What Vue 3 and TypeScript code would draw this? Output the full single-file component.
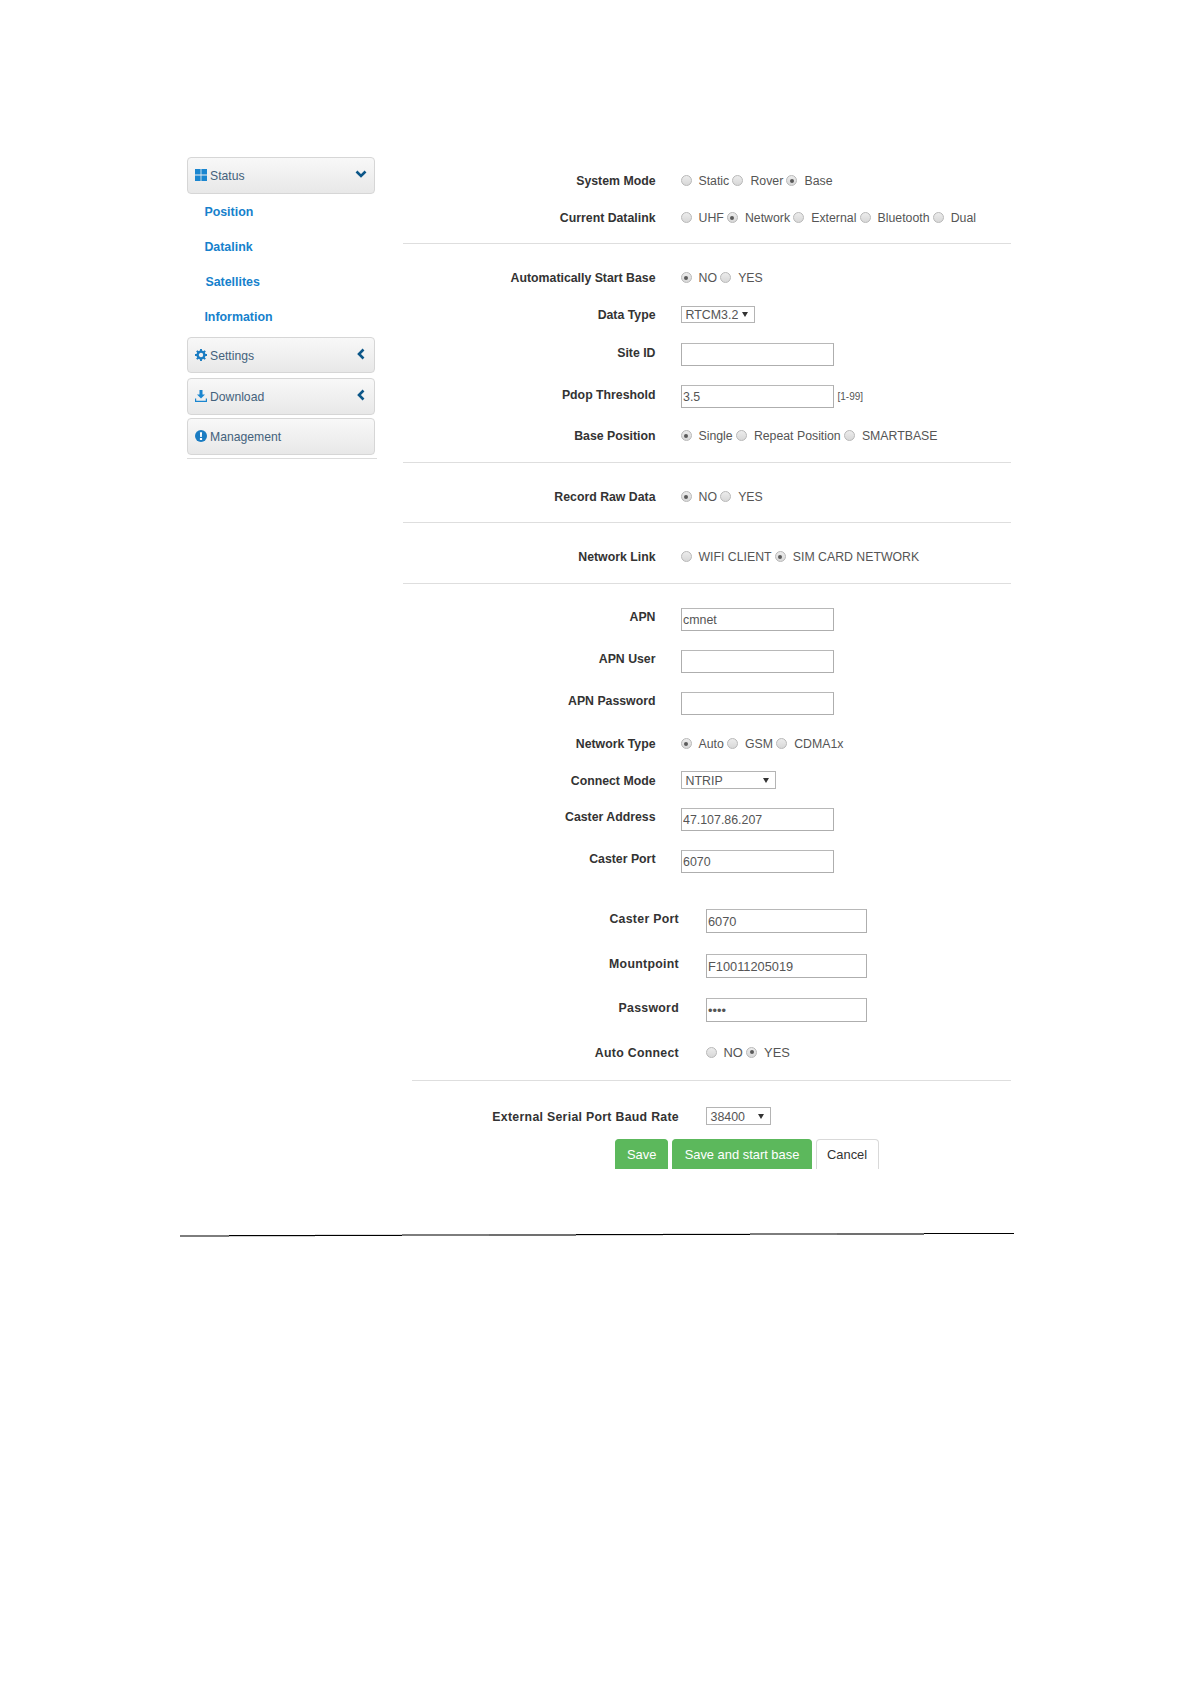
<script setup lang="ts">
type Opt = { text: string; on?: boolean }
type Row =
  | { kind: 'hr'; gap: number; low?: boolean }
  | { kind: 'radio'; gap: number; label: string; opts: Opt[]; low?: boolean }
  | { kind: 'input'; gap: number; label: string; value?: string; hint?: string; low?: boolean; type?: string }
  | { kind: 'select'; gap: number; label: string; value: string; width: number; height: number; low?: boolean }

const radios = (on: number, ...names: string[]): Opt[] => names.map((text, i) => ({ text, on: i === on }))

const rows: Row[] = [
  { kind: 'radio', gap: 0, label: 'System Mode', opts: radios(2, 'Static', 'Rover', 'Base') },
  { kind: 'radio', gap: 15, label: 'Current Datalink', opts: radios(1, 'UHF', 'Network', 'External', 'Bluetooth', 'Dual') },
  { kind: 'hr', gap: 14.6 },
  { kind: 'radio', gap: 22.4, label: 'Automatically Start Base', opts: radios(0, 'NO', 'YES') },
  { kind: 'select', gap: 17.6, label: 'Data Type', value: 'RTCM3.2', width: 74, height: 16.4 },
  { kind: 'input', gap: 21.2, label: 'Site ID' },
  { kind: 'input', gap: 19.3, label: 'Pdop Threshold', value: '3.5', hint: '[1-99]' },
  { kind: 'radio', gap: 16.7, label: 'Base Position', opts: radios(0, 'Single', 'Repeat Position', 'SMARTBASE') },
  { kind: 'hr', gap: 15.3 },
  { kind: 'radio', gap: 22.6, label: 'Record Raw Data', opts: radios(0, 'NO', 'YES') },
  { kind: 'hr', gap: 14.7 },
  { kind: 'radio', gap: 22.7, label: 'Network Link', opts: radios(1, 'WIFI CLIENT', 'SIM CARD NETWORK') },
  { kind: 'hr', gap: 15.3 },
  { kind: 'input', gap: 24.3, label: 'APN', value: 'cmnet' },
  { kind: 'input', gap: 19.6, label: 'APN User' },
  { kind: 'input', gap: 19.6, label: 'APN Password' },
  { kind: 'radio', gap: 18, label: 'Network Type', opts: radios(0, 'Auto', 'GSM', 'CDMA1x') },
  { kind: 'select', gap: 16.6, label: 'Connect Mode', value: 'NTRIP', width: 95, height: 17.4 },
  { kind: 'input', gap: 19.6, label: 'Caster Address', value: '47.107.86.207' },
  { kind: 'input', gap: 19.6, label: 'Caster Port', value: '6070' },
  { kind: 'input', gap: 36.6, label: 'Caster Port', value: '6070', low: true },
  { kind: 'input', gap: 21.3, label: 'Mountpoint', value: 'F10011205019', low: true },
  { kind: 'input', gap: 20.3, label: 'Password', value: 'abcd', low: true, type: 'password' },
  { kind: 'radio', gap: 19.3, label: 'Auto Connect', opts: radios(1, 'NO', 'YES'), low: true },
  { kind: 'hr', gap: 17, low: true },
  { kind: 'select', gap: 26, label: 'External Serial Port Baud Rate', value: '38400', width: 65, height: 17.4, low: true },
]

const subItems = ['Position', 'Datalink', 'Satellites', 'Information']

const ruleSegments = [
  { x: 0, w: 49, y: 2, h: 2, fill: '#7d7d7d' },
  { x: 49, w: 86, y: 2, h: 1, fill: '#000' },
  { x: 49, w: 86, y: 3, h: 1, fill: '#d0d0d0' },
  { x: 135, w: 87, y: 1, h: 1, fill: '#dcdcdc' },
  { x: 135, w: 87, y: 2, h: 1, fill: '#000' },
  { x: 222, w: 87, y: 1, h: 2, fill: '#7d7d7d' },
  { x: 309, w: 87, y: 1, h: 2, fill: '#707070' },
  { x: 396, w: 87, y: 1, h: 1, fill: '#000' },
  { x: 396, w: 87, y: 2, h: 1, fill: '#d8d8d8' },
  { x: 483, w: 87, y: 0, h: 1, fill: '#dcdcdc' },
  { x: 483, w: 87, y: 1, h: 1, fill: '#000' },
  { x: 570, w: 87, y: 0, h: 2, fill: '#7d7d7d' },
  { x: 657, w: 87, y: 0, h: 2, fill: '#707070' },
  { x: 744, w: 90, y: 0, h: 1, fill: '#000' },
]
</script>

<template>
  <div class="page">
    <div class="top">
      <aside class="side">
        <button class="menu-btn" type="button">
          <svg class="ico" viewBox="0 0 12 12"><path d="M0 0h5.6v5.6H0zM6.4 0H12v5.6H6.4zM0 6.4h5.6V12H0zM6.4 6.4H12V12H6.4z" fill="#1a86d0" /></svg>
          <span>Status</span>
          <svg class="chev" viewBox="0 0 12 12"><path d="M1.5 3.5 6 8l4.5-4.5" fill="none" stroke="#0b5688" stroke-width="2.6" /></svg>
        </button>
        <ul class="sub">
          <li v-for="item in subItems" :key="item" :class="{ nudge: item === 'Satellites' }">{{ item }}</li>
        </ul>
        <button class="menu-btn" type="button">
          <svg class="ico" viewBox="0 0 12 12">
            <circle cx="6" cy="6" r="3.4" fill="none" stroke="#1a7cc2" stroke-width="2.4" />
            <path d="M6 0v12M0 6h12M1.8 1.8l8.4 8.4M10.2 1.8l-8.4 8.4" stroke="#1a7cc2" stroke-width="1.9" stroke-dasharray="2.4 7.2 2.4" fill="none" />
          </svg>
          <span>Settings</span>
          <svg class="chev" viewBox="0 0 12 12"><path d="M8.5 1.5 4 6l4.5 4.5" fill="none" stroke="#0b5688" stroke-width="2.6" /></svg>
        </button>
        <button class="menu-btn mt5" type="button">
          <svg class="ico" viewBox="0 0 12 12">
            <path d="M4.5 0h3v4.5H10L6 8.6 2 4.5h2.5z" fill="#1a86d0" />
            <path d="M0 8.5h1.2v2.2h9.6V8.5H12V12H0z" fill="#1a86d0" />
          </svg>
          <span>Download</span>
          <svg class="chev" viewBox="0 0 12 12"><path d="M8.5 1.5 4 6l4.5 4.5" fill="none" stroke="#0b5688" stroke-width="2.6" /></svg>
        </button>
        <button class="menu-btn mt4" type="button">
          <svg class="ico" viewBox="0 0 12 12">
            <circle cx="6" cy="6" r="6" fill="#1a7cc2" />
            <path d="M4.9 2.2h2.2L6.8 7H5.2zM4.9 8h2.2v2H4.9z" fill="#fff" />
          </svg>
          <span>Management</span>
        </button>
        <div class="side-line"></div>
      </aside>

      <form class="form" @submit.prevent>
        <template v-for="(row, i) in rows" :key="i">
          <hr v-if="row.kind === 'hr'" class="sep" :class="{ 'sep--low': row.low }" :style="{ marginTop: row.gap + 'px' }" />
          <div v-else class="row" :class="['row--' + row.kind, { 'row--low': row.low }]" :style="{ marginTop: row.gap + 'px' }">
            <label class="lab">{{ row.label }}</label>
            <div class="ctrl">
              <template v-if="row.kind === 'radio'">
                <span v-for="opt in row.opts" :key="opt.text" class="radio">
                  <i class="dot" :class="{ on: opt.on }"></i>{{ opt.text }}
                </span>
              </template>
              <template v-else-if="row.kind === 'input'">
                <input class="field" :type="row.type ?? 'text'" :value="row.value ?? ''" />
                <small v-if="row.hint" class="hint">{{ row.hint }}</small>
              </template>
              <div v-else class="sel" :style="{ width: row.width + 'px', height: row.height + 'px' }">
                <span>{{ row.value }}</span><i class="caret"></i>
              </div>
            </div>
          </div>
        </template>
        <div class="actions">
          <button class="btn btn--ok" type="button">Save</button>
          <button class="btn btn--ok" type="button">Save and start base</button>
          <button class="btn btn--plain" type="button">Cancel</button>
        </div>
      </form>
    </div>
    <svg class="rule" width="834" height="4" viewBox="0 0 834 4">
      <rect v-for="(s, i) in ruleSegments" :key="i" :x="s.x" :y="s.y" :width="s.w" :height="s.h" :fill="s.fill" />
    </svg>
  </div>
</template>

<style>
html, body { margin: 0; background: #fff; }
</style>

<style scoped>
.page {
  width: 1192px;
  height: 1685px;
  box-sizing: border-box;
  padding-top: 157.3px;
  font-family: "Liberation Sans", Arial, sans-serif;
  background: #fff;
  overflow: hidden;
}
.top { display: flex; align-items: flex-start; padding-left: 187px; height: 1011.7px; }
.side { width: 190px; flex: none; }
.menu-btn {
  display: flex;
  align-items: center;
  width: 188px;
  height: 36.4px;
  padding: 1px 7px 0;
  box-sizing: border-box;
  border: 1px solid #d6d6d6;
  border-radius: 4px;
  background: linear-gradient(#f8f8f8, #e8e8e8);
  font: 12.2px "Liberation Sans", Arial, sans-serif;
  color: #44627c;
}
.mt5 { margin-top: 4.9px; }
.mt4 { margin-top: 3.7px; }
.ico { width: 12px; height: 12px; margin-right: 3px; flex: none; margin-top: -1px; }
.chev { width: 12px; height: 12px; margin-left: auto; margin-top: -4px; margin-right: 0; }
.sub { list-style: none; margin: 0 0 3.2px; padding: 0; }
.sub li {
  height: 35px;
  line-height: 36.6px;
  padding-left: 17.4px;
  font-size: 12.4px;
  font-weight: 700;
  color: #1681cc;
}
.sub li.nudge { padding-left: 18.4px; }
.side-line { width: 190px; height: 1px; background: #dcdcdc; margin-top: 3.2px; }

.form { width: 608px; margin-left: 26px; padding-top: 12.4px; flex: none; }
.sep { margin: 0; height: 1px; border: 0; background: #dedede; }
.sep--low { margin-left: 9px; }
.row { display: flex; align-items: center; }
.row--radio { height: 22px; }
.row--input { height: 22.4px; align-items: flex-start; }
.row--input.row--low { height: 23.7px; }
.lab {
  flex: none;
  box-sizing: border-box;
  width: 252.5px;
  margin-right: 25px;
  text-align: right;
  font-size: 12.3px;
  line-height: 17px;
  font-weight: 700;
  color: #333;
}
.row--radio .lab { padding-top: 1.5px; }
.row--input .lab { padding-top: 1px; }
.row--select .lab { line-height: 14px; padding-top: 1.5px; }
.row--low .lab { width: 276px; margin-right: 26.5px; letter-spacing: .3px; }
.row--low.row--input .lab { padding-top: 2px; }
.ctrl { display: flex; align-items: center; height: 100%; font-size: 12.3px; color: #555; }
.row--low .ctrl { font-size: 12.9px; }
.radio { display: inline-flex; align-items: center; margin-right: 3.2px; white-space: nowrap; }
.dot {
  position: relative;
  width: 11px;
  height: 11px;
  box-sizing: border-box;
  margin-right: 7px;
  border: 1px solid #b8b8b8;
  border-radius: 50%;
  background: linear-gradient(#ececec, #d8d8d8);
  flex: none;
}
.dot.on::after {
  content: "";
  position: absolute;
  left: 2.5px;
  top: 2.5px;
  width: 4px;
  height: 4px;
  border-radius: 50%;
  background: #5a5a5a;
}
.field {
  width: 153px;
  height: calc(100% + .8px);
  margin-top: -.8px;
  box-sizing: border-box;
  padding: 1px 1.5px 0;
  border: 1px solid #aeaeae;
  border-top-color: #b8b8b8;
  border-radius: 0;
  outline: 0;
  background: #fff;
  color: #555;
  font: 12.4px "Liberation Sans", Arial, sans-serif;
}
.row--low .field { width: 161px; font-size: 12.8px; }
.hint { margin-left: 4px; font-size: 10px; color: #555; }
.sel {
  display: flex;
  align-items: center;
  justify-content: space-between;
  box-sizing: border-box;
  padding: 1px 6px 0 4px;
  border: 1px solid #b4b4b4;
  background: #fff;
  color: #555;
  font-size: 12.4px;
}
.caret {
  width: 0;
  height: 0;
  border-left: 3.4px solid transparent;
  border-right: 3.4px solid transparent;
  border-top: 5.4px solid #333;
}
.actions { display: flex; gap: 3.6px; margin-top: 14.3px; margin-left: 212px; height: 30px; }
.btn {
  height: 30px;
  box-sizing: border-box;
  padding: 0;
  border: 1px solid #5cb85c;
  border-bottom: 0;
  border-radius: 4px 4px 0 0;
  font: 12.9px "Liberation Sans", Arial, sans-serif;
}
.btn:nth-child(1) { width: 53.4px; }
.btn:nth-child(2) { width: 140px; }
.btn:nth-child(3) { width: 63px; }
.btn--ok { background: #5cb85c; color: #fff; }
.btn--plain { background: #fff; border-color: #d9d9d9; color: #333; }
.rule { display: block; margin: 64.5px 0 0 180px; }
</style>
